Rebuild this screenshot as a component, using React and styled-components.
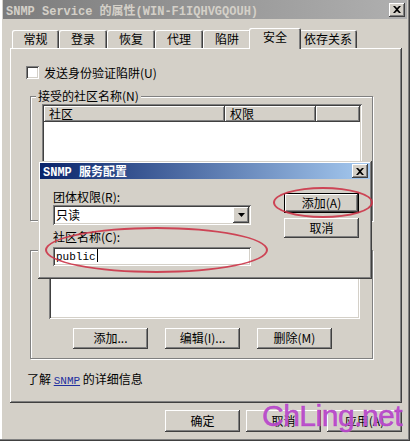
import React from "react";
import styled, { createGlobalStyle, css } from "styled-components";

const FACE = "#d4d0c8";

const GlobalStyle = createGlobalStyle`
  html, body {
    margin: 0;
    padding: 0;
    background: ${FACE};
  }
  body {
    font-family: "Noto Sans CJK SC", "Liberation Sans", sans-serif;
    font-size: 12px;
    color: #000;
  }
`;

// 立体边框（经典 Windows 风格）
const raised = css`
  box-shadow: inset -1px -1px #404040, inset 1px 1px #fff,
    inset -2px -2px #808080, inset 2px 2px ${FACE};
`;
const sunken = css`
  box-shadow: inset 1px 1px #808080, inset -1px -1px #fff,
    inset 2px 2px #404040, inset -2px -2px ${FACE};
`;

const Window = styled.div`
  position: relative;
  width: 410px;
  height: 441px;
  box-sizing: border-box;
  padding: 0 3px 4px 3px;
  background: ${FACE};
  display: flex;
  flex-direction: column;
  overflow: hidden;
  box-shadow: inset -1px -1px #404040, inset -2px -2px #808080,
    inset 2px 0 #fff;
`;

const TitleBar = styled.div`
  height: 19px;
  display: flex;
  align-items: center;
  justify-content: space-between;
  padding: 0 2px 0 3px;
  background: ${(p) =>
    p.$active
      ? "linear-gradient(90deg, #0a246a, #a6caf0)"
      : "linear-gradient(90deg, #7c7c7c, #b0b0b0)"};
  color: ${(p) => (p.$active ? "#fff" : FACE)};
  font-family: "Liberation Mono", "Noto Sans CJK SC", monospace;
  font-weight: bold;
  font-size: 12px;
  white-space: nowrap;
`;

const CloseBox = styled.div`
  width: 16px;
  height: 14px;
  background: ${FACE};
  ${raised};
  display: flex;
  align-items: center;
  justify-content: center;
`;

const Body = styled.div`
  padding: 9px 5px 0 7px;
  display: flex;
  flex-direction: column;
`;

const TabStrip = styled.div`
  height: 20px;
  display: flex;
  align-items: flex-end;
  padding-left: 2px;
`;

const Tab = styled.div`
  position: relative;
  box-sizing: border-box;
  width: ${(p) => p.$w + (p.$selected ? 4 : 0)}px;
  height: ${(p) => (p.$selected ? 21 : 18)}px;
  margin: ${(p) => (p.$selected ? "0 -2px -1px -2px" : "0")};
  z-index: ${(p) => (p.$selected ? 2 : 1)};
  background: ${FACE};
  border-radius: 2px 2px 0 0;
  box-shadow: inset 1px 1px #fff, inset -1px 0 #404040, inset -2px 0 #808080;
  padding-top: 2px;
  text-align: center;
  line-height: 14px;
`;

const Panel = styled.div`
  height: 355px;
  box-sizing: border-box;
  padding: 18px 0 0 16px;
  ${raised};
  display: flex;
  flex-direction: column;
`;

const CheckRow = styled.label`
  display: flex;
  align-items: center;
  gap: 5px;
  height: 13px;
  line-height: 14px;
`;

const CheckBox = styled.span`
  width: 13px;
  height: 13px;
  background: #fff;
  ${sunken};
`;

const GroupBox = styled.div`
  box-sizing: border-box;
  width: 343px;
  height: ${(p) => p.$h}px;
  margin: ${(p) => p.$top}px 0 0 4px;
  border: 1px solid #808080;
  box-shadow: inset 1px 1px #fff, 1px 1px #fff;
  display: flex;
  flex-direction: column;
`;

const Legend = styled.div`
  align-self: flex-start;
  margin: -8px 0 0 5px;
  padding: 0 2px;
  height: 14px;
  line-height: 14px;
  background: ${FACE};
`;

const ListView = styled.div`
  box-sizing: border-box;
  width: ${(p) => p.$w}px;
  height: ${(p) => p.$h}px;
  margin: ${(p) => p.$top}px 0 0 ${(p) => p.$left}px;
  background: #fff;
  ${sunken};
  padding: 2px;
`;

const Header = styled.div`
  display: flex;
  height: 16px;
`;

const HeaderCell = styled.div`
  box-sizing: border-box;
  width: ${(p) => p.$w}px;
  flex: ${(p) => (p.$w ? "none" : "1")};
  background: ${FACE};
  box-shadow: inset -1px -1px #404040, inset 1px 1px #fff,
    inset -2px -2px #808080;
  padding-left: 5px;
  line-height: 16px;
`;

const ButtonRow = styled.div`
  display: flex;
  flex-direction: ${(p) => (p.$vertical ? "column" : "row")};
  gap: ${(p) => p.$gap}px;
  margin: ${(p) => p.$top}px 0 0 ${(p) => p.$left}px;
`;

const Button = styled.div`
  box-sizing: border-box;
  width: 75px;
  height: ${(p) => p.$h || 21}px;
  background: ${FACE};
  ${raised};
  ${(p) =>
    p.$default &&
    css`
      box-shadow: inset 0 0 0 1px #000, inset -2px -2px #404040,
        inset 2px 2px #fff, inset -3px -3px #808080;
    `}
  display: flex;
  align-items: center;
  justify-content: center;
  line-height: 14px;
  padding-bottom: 1px;
`;

const InfoLine = styled.div`
  margin: 13px 0 0 1px;
  line-height: 14px;
`;

const Link = styled.span`
  color: #1f2f9f;
  text-decoration: underline;
  font-family: "Liberation Mono", monospace;
  font-size: 11px;
`;

const Footer = styled.div`
  display: flex;
  justify-content: flex-end;
  gap: 6px;
  margin-top: 7px;
`;

/* 弹出的“SNMP 服务配置”对话框 */
const Dialog = styled.div`
  position: absolute;
  left: 38px;
  top: 161px;
  width: 334px;
  height: 118px;
  box-sizing: border-box;
  padding: 2px;
  background: ${FACE};
  box-shadow: inset -1px -1px #404040, inset 1px 1px ${FACE},
    inset -2px -2px #808080, inset 2px 2px #fff;
  z-index: 5;
`;

const DialogTitle = styled(TitleBar)`
  height: 16px;
  padding: 0 2px 0 3px;
`;

const DialogBody = styled.div`
  display: flex;
  gap: 33px;
  padding: 11px 0 0 13px;
`;

const Column = styled.div`
  display: flex;
  flex-direction: column;
  width: ${(p) => p.$w}px;
`;

const FieldLabel = styled.div`
  line-height: 14px;
  height: 14px;
  margin-top: ${(p) => p.$top || 0}px;
`;

const Field = styled.div`
  box-sizing: border-box;
  height: ${(p) => p.$h}px;
  margin-top: ${(p) => p.$top}px;
  background: #fff;
  ${sunken};
  display: flex;
  align-items: center;
  padding: 2px 2px 2px 3px;
`;

const FieldText = styled.span`
  flex: 1;
  line-height: 14px;
  ${(p) =>
    p.$mono &&
    css`
      font-family: "Liberation Mono", monospace;
      font-size: 11px;
    `}
`;

const Caret = styled.span`
  display: inline-block;
  width: 1px;
  height: 13px;
  background: #000;
  vertical-align: -2px;
  margin-left: 1px;
`;

const DropButton = styled.div`
  width: 16px;
  height: 16px;
  background: ${FACE};
  ${raised};
  display: flex;
  align-items: center;
  justify-content: center;
`;

const Ring = styled.div`
  position: absolute;
  left: ${(p) => p.$x}px;
  top: ${(p) => p.$y}px;
  width: ${(p) => p.$w}px;
  height: ${(p) => p.$h}px;
  box-sizing: border-box;
  border: 2px solid rgba(204, 52, 72, 0.9);
  border-radius: 50%;
  z-index: 6;
  pointer-events: none;
`;

const Watermark = styled.div`
  position: absolute;
  left: 262px;
  top: 398px;
  z-index: 7;
  font-family: "Liberation Sans", sans-serif;
  font-size: 30px;
  line-height: 36px;
  letter-spacing: -0.5px;
  color: rgba(176, 52, 196, 0.85);
  -webkit-text-stroke: 0.6px rgba(176, 52, 196, 0.85);
  text-shadow: 0 0 1px rgba(255, 255, 255, 0.8);
  pointer-events: none;
`;

const CloseIcon = () => (
  <svg width="8" height="7" viewBox="0 0 8 7">
    <path d="M0 0h2l2 2 2-2h2L5 3.5 8 7H6L4 5 2 7H0l3-3.5z" fill="#000" />
  </svg>
);

const ArrowDown = () => (
  <svg width="7" height="4" viewBox="0 0 7 4">
    <path d="M0 0h7L3.5 4z" fill="#000" />
  </svg>
);

const tabs = [
  ["常规", 47],
  ["登录", 48],
  ["恢复", 48],
  ["代理", 48],
  ["陷阱", 48],
  ["安全", 48],
  ["依存关系", 58],
];

export default function App() {
  return (
    <>
      <GlobalStyle />
      <Window>
        <TitleBar>
          <span>SNMP Service 的属性(WIN-F1IQHVGQOUH)</span>
          <CloseBox>
            <CloseIcon />
          </CloseBox>
        </TitleBar>

        <Body>
          <TabStrip>
            {tabs.map(([name, w]) => (
              <Tab key={name} $w={w} $selected={name === "安全"}>
                {name}
              </Tab>
            ))}
          </TabStrip>

          <Panel>
            <CheckRow>
              <CheckBox />
              发送身份验证陷阱(U)
            </CheckRow>

            <GroupBox $top={17} $h={125}>
              <Legend>接受的社区名称(N)</Legend>
              <ListView $w={320} $h={78} $top={1} $left={11}>
                <Header>
                  <HeaderCell $w={181}>社区</HeaderCell>
                  <HeaderCell $w={91}>权限</HeaderCell>
                  <HeaderCell />
                </Header>
              </ListView>
            </GroupBox>

            {/* 第二组的标题被对话框遮住 */}
            <GroupBox $top={29} $h={109}>
              <ListView $w={311} $h={58} $top={10} $left={18} />
              <ButtonRow $gap={17} $top={9} $left={42}>
                <Button>添加...</Button>
                <Button>编辑(I)...</Button>
                <Button>删除(M)</Button>
              </ButtonRow>
            </GroupBox>

            <InfoLine>
              了解 <Link>SNMP</Link> 的详细信息
            </InfoLine>
          </Panel>

          <Footer>
            <Button $h={22}>确定</Button>
            <Button $h={22}>取消</Button>
            <Button $h={22}>应用(A)</Button>
          </Footer>
        </Body>

        <Dialog>
          <DialogTitle $active>
            <span>SNMP 服务配置</span>
            <CloseBox>
              <CloseIcon />
            </CloseBox>
          </DialogTitle>
          <DialogBody>
            <Column $w={198}>
              <FieldLabel>团体权限(R):</FieldLabel>
              <Field $h={20} $top={1}>
                <FieldText>只读</FieldText>
                <DropButton>
                  <ArrowDown />
                </DropButton>
              </Field>
              <FieldLabel $top={5}>社区名称(C):</FieldLabel>
              <Field $h={19} $top={3}>
                <FieldText $mono>
                  public
                  <Caret />
                </FieldText>
              </Field>
            </Column>
            <Column $w={75}>
              <ButtonRow $vertical $gap={5} $top={3} $left={0}>
                <Button $default $h={20}>添加(A)</Button>
                <Button $h={20}>取消</Button>
              </ButtonRow>
            </Column>
          </DialogBody>
        </Dialog>

        <Ring $x={273} $y={187} $w={100} $h={31} />
        <Ring $x={45} $y={227} $w={223} $h={46} />
        <Watermark>ChLing.net</Watermark>
      </Window>
    </>
  );
}
